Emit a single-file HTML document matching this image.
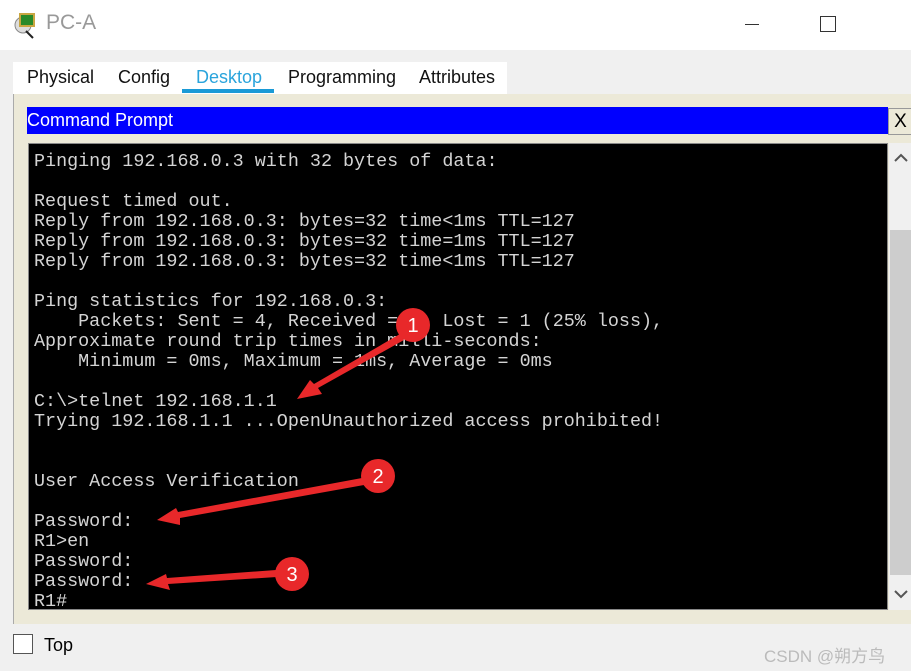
<!DOCTYPE html>
<html><head><style>
body{margin:0;width:911px;height:671px;overflow:hidden;background:#f0f0f0;font-family:"Liberation Sans",sans-serif;position:relative}
.top{position:absolute;left:0;top:0;width:911px;height:50px;background:#fff}
.ttl{position:absolute;left:46px;top:11px;font-size:21px;color:#999}
.tabs{position:absolute;left:13px;top:62px;width:494px;height:32px;background:#fff}
.tab{position:absolute;top:5px;font-size:18px;color:#111}
.panel{position:absolute;left:13px;top:94px;width:898px;height:530px;background:#ece9d8;border-left:1px solid #aaa}
.blue{position:absolute;left:27px;top:107px;width:861px;height:27px;background:#0000ff;color:#fff;font-size:18px;line-height:27px}
.xb{position:absolute;left:888px;top:108px;width:23px;height:25px;background:#ece9d8;border:1px solid #999;font-size:19px;line-height:25px;text-align:center}
.term{position:absolute;left:28px;top:143px;width:860px;height:467px;background:#000;border:1px solid #888;box-sizing:border-box}
pre{margin:0;position:absolute;left:5px;top:8px;color:#d4d4d4;font-family:"Liberation Mono",monospace;font-size:18.4px;line-height:20px}
.sb{position:absolute;left:889px;top:143px;width:22px;height:467px;background:#f0f0f0}
.th{position:absolute;left:890px;top:230px;width:21px;height:345px;background:#cdcdcd}
</style></head><body>
<div class="top"></div>
<svg style="position:absolute;left:12px;top:10px" width="30" height="30"><circle cx="11" cy="15" r="8" fill="#ddd" stroke="#888"/><rect x="8" y="4" width="14" height="12" fill="#2a8a2a" stroke="#c9a642" stroke-width="2"/><line x1="14" y1="21" x2="21" y2="28" stroke="#222" stroke-width="2"/></svg>
<div class="ttl">PC-A</div>
<div style="position:absolute;left:745px;top:24px;width:14px;height:1px;background:#333"></div>
<div style="position:absolute;left:820px;top:16px;width:14px;height:14px;border:1px solid #333"></div>
<div class="tabs">
<span class="tab" style="left:14px">Physical</span>
<span class="tab" style="left:105px">Config</span>
<span class="tab" style="left:183px;color:#2aa4dc">Desktop</span>
<div style="position:absolute;left:169px;top:27px;width:92px;height:4px;background:#1a9ad6"></div>
<span class="tab" style="left:275px">Programming</span>
<span class="tab" style="left:406px">Attributes</span>
</div>
<div class="panel"></div>
<div class="blue">Command Prompt</div>
<div class="xb">X</div>
<div class="term"><pre>Pinging 192.168.0.3 with 32 bytes of data:

Request timed out.
Reply from 192.168.0.3: bytes=32 time&lt;1ms TTL=127
Reply from 192.168.0.3: bytes=32 time=1ms TTL=127
Reply from 192.168.0.3: bytes=32 time&lt;1ms TTL=127

Ping statistics for 192.168.0.3:
    Packets: Sent = 4, Received = 3, Lost = 1 (25% loss),
Approximate round trip times in milli-seconds:
    Minimum = 0ms, Maximum = 1ms, Average = 0ms

C:\&gt;telnet 192.168.1.1
Trying 192.168.1.1 ...OpenUnauthorized access prohibited!


User Access Verification

Password:
R1&gt;en
Password:
Password:
R1#</pre></div>
<div class="sb"></div><div class="th"></div>
<svg style="position:absolute;left:893px;top:152px" width="16" height="12"><path d="M2 9 L8 3 L14 9" fill="none" stroke="#555" stroke-width="2"/></svg>
<svg style="position:absolute;left:893px;top:588px" width="16" height="12"><path d="M2 3 L8 9 L14 3" fill="none" stroke="#555" stroke-width="2"/></svg>
<svg style="position:absolute;left:0;top:0" width="911" height="671">
<g fill="#e8282a">
<polygon points="400,334 404,340 318,388 322,394 297,399 310,380 314,384"/>
<polygon points="362,478 364,485 180,518 180,525 157,520 176,508 178,512"/>
<polygon points="276,570 277,577 168,584 170,590 146,584 166,574 167,578"/>
<circle cx="413" cy="325" r="17"/><circle cx="378" cy="476" r="17"/><circle cx="292" cy="574" r="17"/>
</g>
<g fill="#fff" font-family="Liberation Sans,sans-serif" font-size="20" text-anchor="middle">
<text x="413" y="332">1</text><text x="378" y="483">2</text><text x="292" y="581">3</text></g>
</svg>
<div style="position:absolute;left:13px;top:634px;width:20px;height:20px;border:1px solid #555;background:#fff;box-sizing:border-box"></div>
<div style="position:absolute;left:44px;top:635px;font-size:18px">Top</div>
<div style="position:absolute;left:764px;top:642px;font-size:17px;color:#bbb;font-family:'Liberation Sans','Noto Sans CJK SC',sans-serif">CSDN @朔方鸟</div>
</body></html>
